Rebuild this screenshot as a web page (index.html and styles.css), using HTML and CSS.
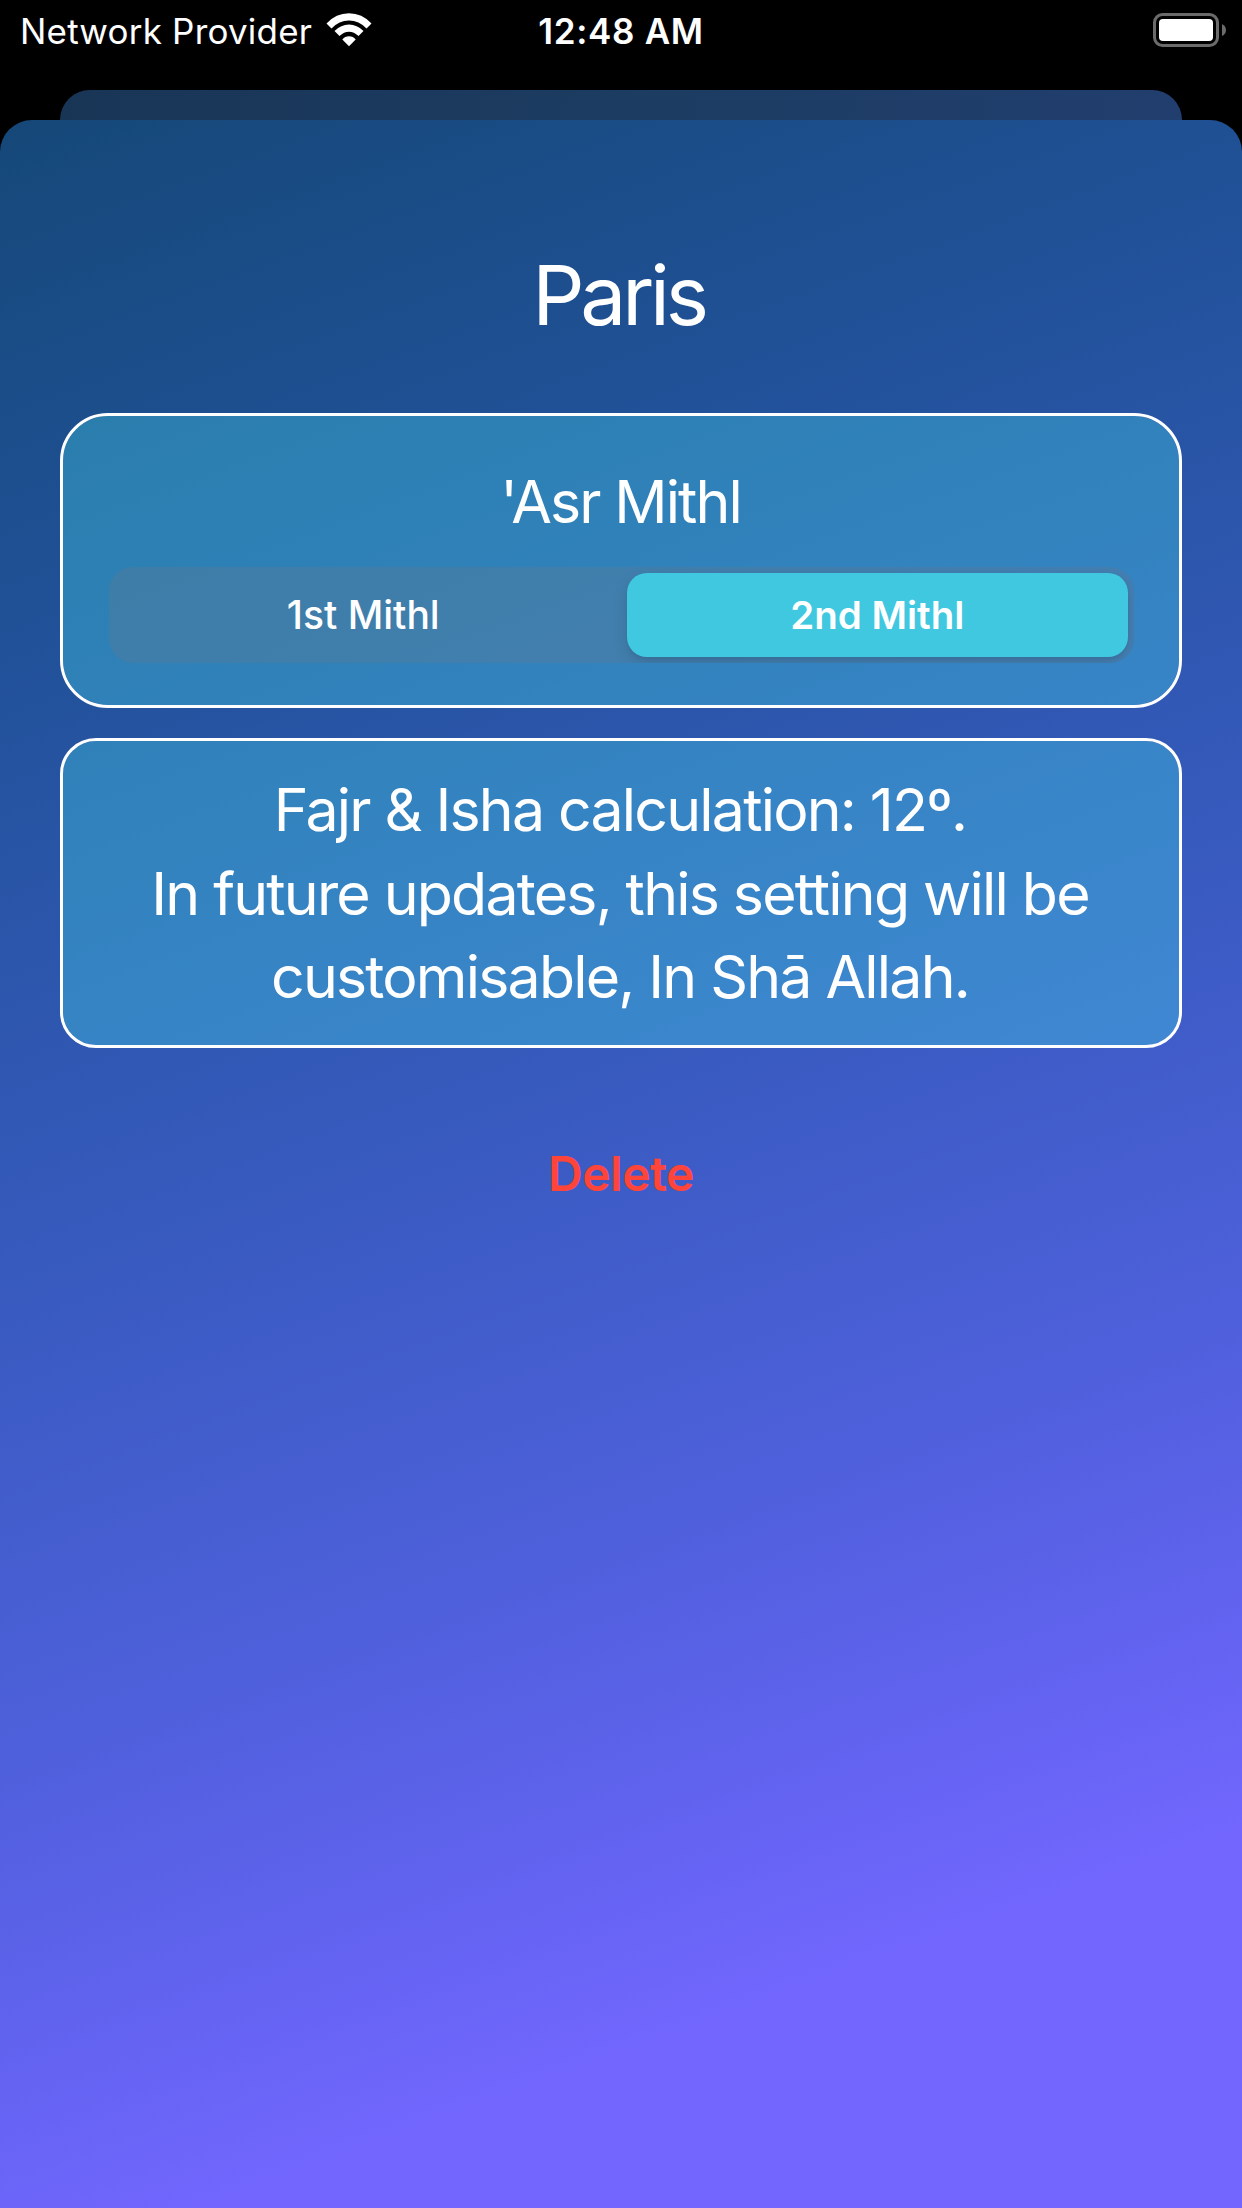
FILE: index.html
```html
<!DOCTYPE html>
<html lang="en">
<head>
<meta charset="utf-8">
<title>Paris</title>
<link rel="stylesheet" href="styles.css">
</head>
<body>
<div class="screen">
  <header class="status">
    <div class="status-left">
      <span class="carrier">Network Provider</span>
      <svg class="wifi" viewBox="0 0 46 34" width="46" height="34">
        <path d="M0.500 10.500Q10 .3 23 .3T45.500 10.500L40.500 15.500Q33 7.500 23 7.500T5.500 15.500Z"/>
        <path d="M8.500 18Q15 11.500 23 11.500T37.500 18L32.500 23Q28 18.700 23 18.700T13.500 23Z"/>
        <path d="M16.300 26.500Q19 23.200 23 23.200T29.700 26.500L23 33.300Z"/>
      </svg>
    </div>
    <span class="time">12:48 AM</span>
    <div class="status-right">
      <svg class="battery" viewBox="0 0 74 34" width="74" height="34">
        <rect class="shell" x="1.500" y="1.500" width="63" height="31" rx="8"/>
        <rect class="charge" x="6" y="6" width="54" height="22" rx="4"/>
        <path class="tip" d="M69 11Q73 13 73 17T69 23Z"/>
      </svg>
    </div>
  </header>
  <div class="back-sheet"></div>
  <main class="sheet">
    <h1 class="city">Paris</h1>
    <section class="card asr">
      <h2 class="card-title">'Asr Mithl</h2>
      <div class="segments">
        <button class="segment">1st Mithl</button>
        <button class="segment selected">2nd Mithl</button>
      </div>
    </section>
    <section class="card note">
      <p class="line">Fajr &amp; Isha calculation: 12º.</p>
      <p class="line">In future updates, this setting will be</p>
      <p class="line">customisable, In Shā Allah.</p>
    </section>
    <button class="delete">Delete</button>
  </main>
</div>
</body>
</html>
```
FILE: styles.css
```css
* { box-sizing: border-box; }
body {
  margin: 0;
  background: #000;
  color: #fff;
  font-family: Inter, "Liberation Sans", sans-serif;
}
.screen {
  width: 1242px;
  height: 2208px;
  display: flex;
  flex-direction: column;
  overflow: hidden;
}
.status {
  height: 90px;
  flex: none;
  display: grid;
  grid-template-columns: 1fr auto 1fr;
  align-items: start;
  padding: 0 20px;
  line-height: 62px;
}
.status-left { display: flex; }
.carrier { font-size: 35px; letter-spacing: 0.2px; width: 306px; white-space: nowrap; }
.wifi { margin-top: 13px; fill: #fff; }
.time { font-size: 35px; font-weight: 600; letter-spacing: 0.7px; }
.status-right { display: flex; justify-content: flex-end; }
.battery { margin: 13px -5px 0 0; }
.shell { fill: none; stroke: #6b6b6b; stroke-width: 3; }
.charge { fill: #fff; }
.tip { fill: #6b6b6b; }
.back-sheet {
  height: 60px;
  flex: none;
  margin: 0 60px -30px;
  border-radius: 30px 30px 0 0;
  background: linear-gradient(100deg, #193556, #1c3c61 50%, #213e6e);
}
.sheet {
  flex: 1;
  position: relative;
  border-radius: 32px 32px 0 0;
  padding: 0 60px;
  background: linear-gradient(160deg, #154878 0%, #205197 20%, #365abd 45%, #4f60dc 65%, #6063ee 75.5%, #7366ff 86%);
  display: flex;
  flex-direction: column;
}
.city {
  margin: 117px 0 1px;
  padding-right: 5px;
  height: 118px;
  font-size: 82px;
  font-weight: 400;
  letter-spacing: -4.2px;
  line-height: 118px;
  text-align: center;
}
.card {
  border: 3px solid #fff;
  background: rgba(64, 200, 224, 0.4);
  background-clip: padding-box;
}
.asr {
  margin-top: 57px;
  height: 295px;
  border-radius: 48px;
  padding: 46px 45px 0 46px;
}
.card-title {
  margin: 0;
  padding-right: 2px;
  font-size: 59px;
  font-weight: 430;
  letter-spacing: -1.9px;
  line-height: 80px;
  text-align: center;
}
.segments {
  margin-top: 25px;
  height: 96px;
  padding: 6px;
  border-radius: 24px;
  background: rgba(118, 118, 128, 0.24);
  display: grid;
  grid-template-columns: 1fr 1fr;
  gap: 10px;
  overflow: hidden;
}
.segment {
  border: 0;
  padding: 0 5px 0 0;
  background: none;
  border-radius: 20px;
  color: #fff;
  font: 450 39px/84px Inter, sans-serif;
}
.selected {
  padding: 0;
  background: #40c8e0;
  font-size: 38.5px;
  font-weight: 600;
  box-shadow: 0 6px 16px rgba(0, 0, 0, 0.12), 0 3px 3px rgba(0, 0, 0, 0.04);
}
.note {
  margin-top: 30px;
  height: 310px;
  border-radius: 36px;
  padding-top: 27px;
}
.line {
  margin: 0;
  padding-right: 2px;
  font-size: 59px;
  font-weight: 430;
  letter-spacing: -1.8px;
  line-height: 83.5px;
  text-align: center;
  white-space: nowrap;
}
.delete {
  align-self: center;
  margin-top: 91px;
  border: 0;
  padding: 0;
  background: none;
  color: #ff453a;
  font: 600 48px/70px Inter, sans-serif;
  letter-spacing: -0.5px;
}
```
